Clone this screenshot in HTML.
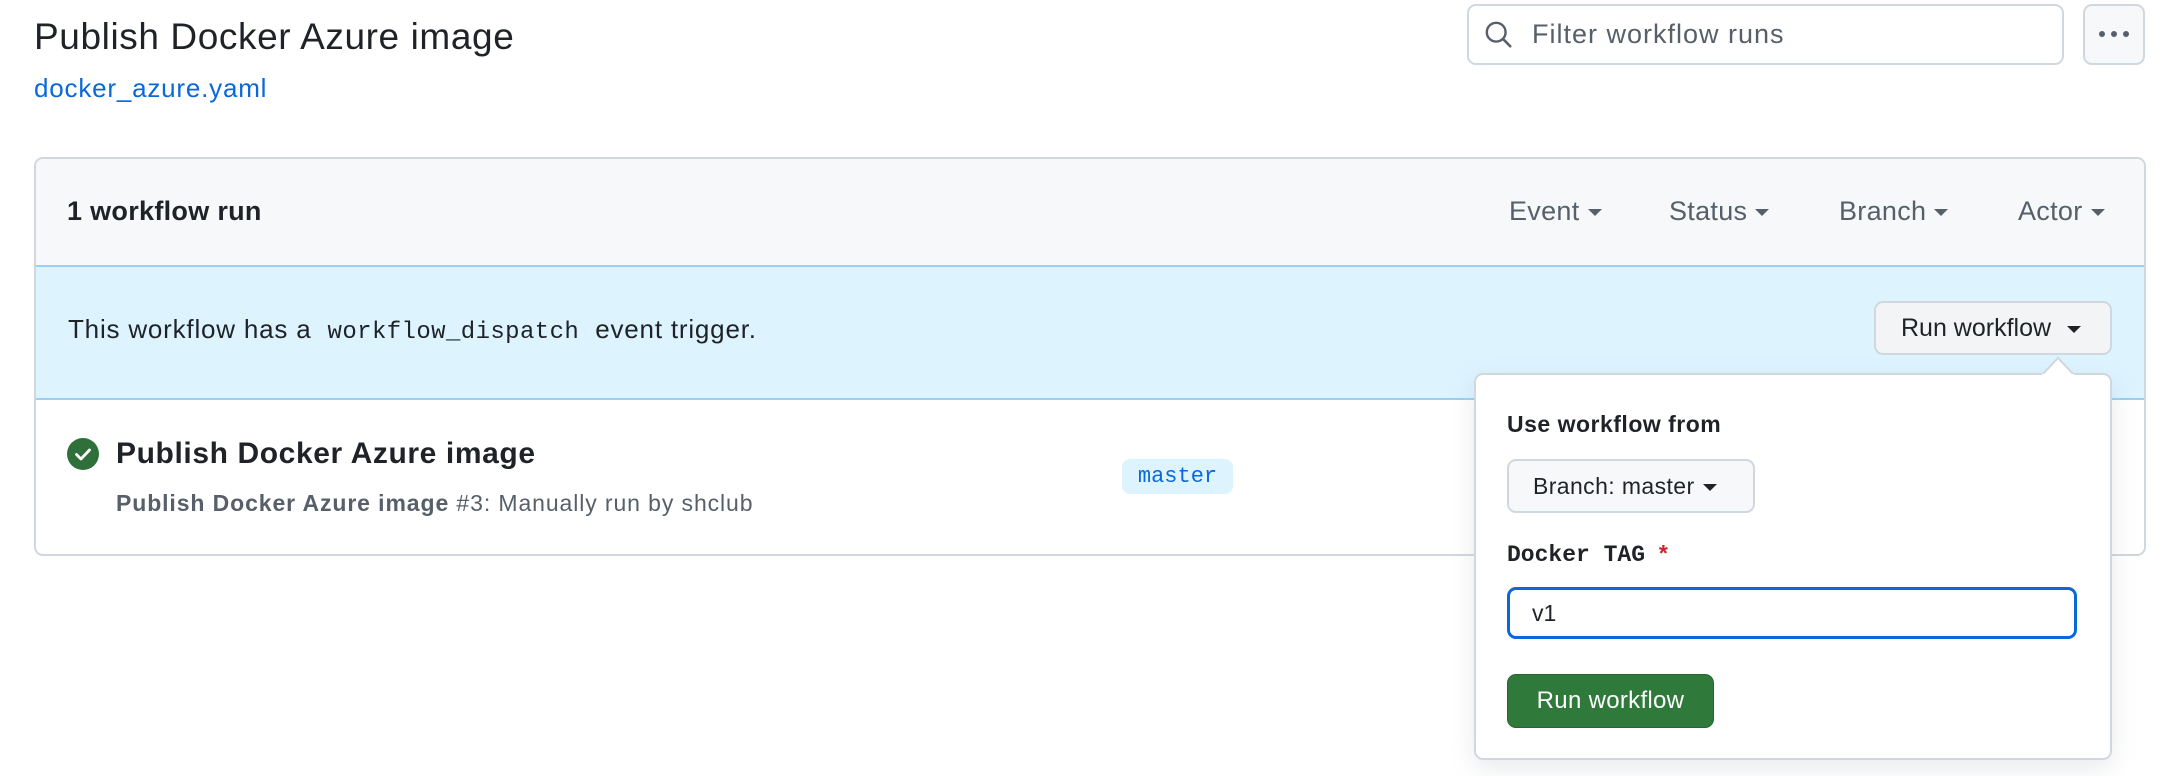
<!DOCTYPE html>
<html><head><meta charset="utf-8"><style>
*{box-sizing:border-box;margin:0;padding:0}
body{width:2174px;height:776px;background:#fff;font-family:"Liberation Sans",sans-serif;color:#1f2328;position:relative;overflow:hidden}
.a{position:absolute;white-space:nowrap}
.caret{display:inline-block;width:0;height:0;border-left:7px solid transparent;border-right:7px solid transparent;border-top:7px solid #57606a;vertical-align:middle;margin-left:8px}
.mono{font-family:"Liberation Mono",monospace}
</style></head><body>
<div class="a" style="left:34px;top:14px;font-size:37px;letter-spacing:0.6px;line-height:46px">Publish Docker Azure image</div>
<div class="a" style="left:34px;top:72px;font-size:26px;letter-spacing:0.8px;line-height:32px;color:#0969da">docker_azure.yaml</div>

<div class="a" style="left:1467px;top:4px;width:597px;height:61px;border:2px solid #d0d7de;border-radius:9px;background:#fff"></div>
<svg class="a" style="left:1484px;top:20px" width="30" height="30" viewBox="0 0 32 32"><circle cx="13" cy="13" r="10" fill="none" stroke="#57606a" stroke-width="2.6"/><line x1="20.5" y1="20.5" x2="28" y2="28" stroke="#57606a" stroke-width="2.8" stroke-linecap="round"/></svg>
<div class="a" style="left:1532px;top:17px;font-size:27px;letter-spacing:1px;line-height:34px;color:#57606a">Filter workflow runs</div>
<div class="a" style="left:2083px;top:4px;width:62px;height:61px;border:2px solid #d0d7de;border-radius:9px;background:#f6f8fa"></div>
<div class="a" style="left:2099px;top:31px;width:34px;height:8px">
<span style="position:absolute;left:0;top:0;width:6px;height:6px;border-radius:3px;background:#57606a"></span>
<span style="position:absolute;left:12px;top:0;width:6px;height:6px;border-radius:3px;background:#57606a"></span>
<span style="position:absolute;left:24px;top:0;width:6px;height:6px;border-radius:3px;background:#57606a"></span></div>

<div class="a" style="left:34px;top:157px;width:2112px;height:399px;border:2px solid #d0d7de;border-radius:9px;overflow:hidden">
 <div style="position:absolute;left:0;top:0;right:0;height:106px;background:#f6f8fa"></div>
 <div style="position:absolute;left:0;top:106px;right:0;height:135px;background:#ddf4ff;border-top:2px solid #9ad0f5;border-bottom:2px solid #9ad0f5"></div>
</div>
<div class="a" style="left:67px;top:195px;font-size:27px;letter-spacing:0.3px;font-weight:bold;line-height:32px">1 workflow run</div>
<div class="a" style="left:1509px;top:195px;font-size:27px;letter-spacing:0.3px;line-height:32px;color:#57606a">Event<span class="caret"></span></div>
<div class="a" style="left:1669px;top:195px;font-size:27px;letter-spacing:0.3px;line-height:32px;color:#57606a">Status<span class="caret"></span></div>
<div class="a" style="left:1839px;top:195px;font-size:27px;letter-spacing:0.3px;line-height:32px;color:#57606a">Branch<span class="caret"></span></div>
<div class="a" style="left:2018px;top:195px;font-size:27px;letter-spacing:0.3px;line-height:32px;color:#57606a">Actor<span class="caret"></span></div>

<div class="a" style="left:68px;top:313px;font-size:26px;letter-spacing:0.8px;line-height:32px">This workflow has a&nbsp; <span class="mono" style="font-size:24px;letter-spacing:0.4px">workflow_dispatch</span>&nbsp; event trigger.</div>
<div class="a" style="left:1874px;top:301px;width:238px;height:54px;border:2px solid #d0d7de;border-radius:9px;background:#f3f4f6;font-size:25px;line-height:50px;padding-left:25px">Run workflow<span class="caret" style="border-top-color:#1f2328;margin-left:16px"></span></div>

<svg class="a" style="left:67px;top:438px" width="32" height="32" viewBox="0 0 32 32"><circle cx="16" cy="16" r="16" fill="#2f6f3a"/><path d="M9.5 16.5l4.5 4.5 8.5-9" fill="none" stroke="#fff" stroke-width="2.8" stroke-linecap="round" stroke-linejoin="round"/></svg>
<div class="a" style="left:116px;top:436px;font-size:30px;letter-spacing:0.6px;font-weight:bold;line-height:36px">Publish Docker Azure image</div>
<div class="a" style="left:116px;top:489px;font-size:23px;letter-spacing:0.9px;line-height:28px;color:#57606a"><b>Publish Docker Azure image</b> #3: Manually run by shclub</div>
<div class="a mono" style="left:1122px;top:459px;width:111px;height:35px;background:#ddf4ff;border-radius:8px;color:#0969da;font-size:22px;line-height:35px;text-align:center">master</div>

<div class="a" style="left:1474px;top:373px;width:638px;height:387px;background:#fff;border:2px solid #d0d7de;border-radius:9px;box-shadow:0 8px 24px rgba(140,149,159,.2)"></div>
<svg class="a" style="left:2042px;top:356px" width="32" height="19" viewBox="0 0 32 19"><path d="M0 19 L16 2 L32 19" fill="#fff" stroke="#d0d7de" stroke-width="2"/><rect x="0" y="18" width="32" height="2" fill="#fff"/></svg>
<div class="a" style="left:1507px;top:410px;font-size:23px;letter-spacing:0.5px;font-weight:bold;line-height:28px">Use workflow from</div>
<div class="a" style="left:1507px;top:459px;width:248px;height:54px;border:2px solid #d0d7de;border-radius:9px;background:#f6f8fa;font-size:23px;letter-spacing:0.4px;line-height:50px;padding-left:24px">Branch: master<span class="caret" style="border-top-color:#1f2328"></span></div>
<div class="a mono" style="left:1507px;top:539px;font-size:23px;font-weight:bold;line-height:28px">Docker TAG <span style="color:#cf222e;font-family:'Liberation Sans',sans-serif">*</span></div>
<div class="a" style="left:1507px;top:587px;width:570px;height:52px;border:3px solid #0969da;border-radius:9px;font-size:23px;line-height:46px;padding-left:22px">v1</div>
<div class="a" style="left:1507px;top:674px;width:207px;height:54px;border:1px solid #256630;border-radius:9px;background:#2f7a3b;color:#fff;font-size:24px;letter-spacing:0.3px;line-height:52px;text-align:center">Run workflow</div>
</body></html>
